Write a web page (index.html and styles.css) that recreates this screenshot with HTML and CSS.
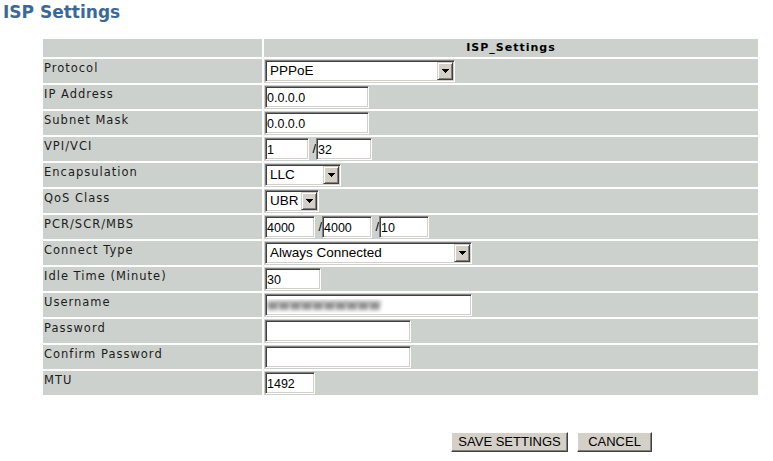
FILE: index.html
```html
<!DOCTYPE html>
<html>
<head>
<meta charset="utf-8">
<title>ISP Settings</title>
<link rel="stylesheet" href="styles.css">
</head>
<body>
<h1 class="title">ISP Settings</h1>
<table class="grid">
  <colgroup><col class="c1"><col class="c2"></colgroup>
  <tr class="head"><th></th><th>ISP_Settings</th></tr>
  <tr><td class="lbl">Protocol</td><td class="fld">
    <div class="sel w190"><span class="sel-val">PPPoE</span><span class="sel-btn"><svg width="7" height="4" viewBox="0 0 7 4"><rect x="0" y="0" width="7" height="1"/><rect x="1" y="1" width="5" height="1"/><rect x="2" y="2" width="3" height="1"/><rect x="3" y="3" width="1" height="1"/></svg></span></div>
  </td></tr>
  <tr><td class="lbl">IP Address</td><td class="fld"><input class="txt w104" value="0.0.0.0"></td></tr>
  <tr><td class="lbl">Subnet Mask</td><td class="fld"><input class="txt w104" value="0.0.0.0"></td></tr>
  <tr><td class="lbl">VPI/VCI</td><td class="fld"><div class="multi"><input class="txt w44" value="1"><span class="slash">/</span><input class="txt w56" value="32"></div></td></tr>
  <tr><td class="lbl">Encapsulation</td><td class="fld">
    <div class="sel w76"><span class="sel-val">LLC</span><span class="sel-btn"><svg width="7" height="4" viewBox="0 0 7 4"><rect x="0" y="0" width="7" height="1"/><rect x="1" y="1" width="5" height="1"/><rect x="2" y="2" width="3" height="1"/><rect x="3" y="3" width="1" height="1"/></svg></span></div>
  </td></tr>
  <tr><td class="lbl">QoS Class</td><td class="fld">
    <div class="sel w54"><span class="sel-val">UBR</span><span class="sel-btn"><svg width="7" height="4" viewBox="0 0 7 4"><rect x="0" y="0" width="7" height="1"/><rect x="1" y="1" width="5" height="1"/><rect x="2" y="2" width="3" height="1"/><rect x="3" y="3" width="1" height="1"/></svg></span></div>
  </td></tr>
  <tr><td class="lbl">PCR/SCR/MBS</td><td class="fld"><div class="multi"><input class="txt w50" value="4000"><span class="slash">/</span><input class="txt w50" value="4000"><span class="slash">/</span><input class="txt w50" value="10"></div></td></tr>
  <tr><td class="lbl">Connect Type</td><td class="fld">
    <div class="sel w207"><span class="sel-val">Always Connected</span><span class="sel-btn"><svg width="7" height="4" viewBox="0 0 7 4"><rect x="0" y="0" width="7" height="1"/><rect x="1" y="1" width="5" height="1"/><rect x="2" y="2" width="3" height="1"/><rect x="3" y="3" width="1" height="1"/></svg></span></div>
  </td></tr>
  <tr><td class="lbl">Idle Time (Minute)</td><td class="fld"><input class="txt w56" value="30"></td></tr>
  <tr><td class="lbl">Username</td><td class="fld"><input class="txt w207 blur" value="WWWWWWWWWW"></td></tr>
  <tr><td class="lbl">Password</td><td class="fld"><input class="txt w146" type="password" value=""></td></tr>
  <tr><td class="lbl">Confirm Password</td><td class="fld"><input class="txt w146" type="password" value=""></td></tr>
  <tr><td class="lbl">MTU</td><td class="fld"><input class="txt w50" value="1492"></td></tr>
</table>
<div class="actions">
  <button class="btn w117">SAVE SETTINGS</button>
  <button class="btn w75">CANCEL</button>
</div>
</body>
</html>
```
FILE: styles.css
```css
html, body {
  margin: 0;
  padding: 0;
  background: #ffffff;
}
body {
  font-family: "DejaVu Sans", Verdana, sans-serif;
  color: #000;
}
.title {
  margin: 2px 0 0 3px;
  font-family: "DejaVu Sans", Verdana, sans-serif;
  font-weight: bold;
  font-size: 17px;
  line-height: 20px;
  color: #3a6899;
}
.grid {
  margin: 15px 0 0 41px;
  border-collapse: separate;
  border-spacing: 2px;
  table-layout: fixed;
  width: 719px;
}
.c1 { width: 219px; }
.c2 { width: 494px; }
.grid th,
.grid td {
  background: #cdd1ce;
  padding: 0;
}
.head th {
  height: 18px;
  font-size: 11px;
  font-weight: bold;
  letter-spacing: 1px;
  line-height: 18px;
  text-align: center;
  vertical-align: middle;
}
.lbl {
  height: 21px;
  padding: 3px 0 0 1px !important;
  vertical-align: top;
  font-size: 11.5px;
  line-height: 13px;
  letter-spacing: 1px;
  white-space: nowrap;
  color: #1c1c1c;
}
.fld {
  height: 23px;
  padding: 1px 0 0 1px !important;
  vertical-align: top;
}
.multi {
  display: flex;
  align-items: flex-start;
}
.slash {
  width: 7px;
  text-align: right;
  font-family: "Liberation Sans", Arial, sans-serif;
  font-size: 13px;
  line-height: 22px;
}
.txt {
  box-sizing: border-box;
  display: block;
  height: 22px;
  margin: 0;
  padding: 1px 1px 0 1px;
  background: #fff;
  border-style: solid;
  border-width: 1px;
  border-color: #808080 #ffffff #ffffff #808080;
  box-shadow: inset 1px 1px #404040, inset -1px -1px #d4d0c8;
  font-family: "Liberation Sans", Arial, sans-serif;
  font-size: 12.5px;
  color: #000;
  outline: none;
}
.blur {
  color: transparent;
  text-shadow: 0 0 4px rgba(70, 70, 70, 1);
  font-size: 12px;
  font-weight: bold;
}
.sel {
  box-sizing: border-box;
  display: flex;
  align-items: center;
  height: 22px;
  padding: 1px;
  background: #fff;
  border-style: solid;
  border-width: 1px;
  border-color: #808080 #ffffff #ffffff #808080;
  box-shadow: inset 1px 1px #404040, inset -1px -1px #d4d0c8;
}
.sel-val {
  flex: 1;
  padding-left: 3px;
  font-family: "Liberation Sans", Arial, sans-serif;
  font-size: 13.5px;
  line-height: 18px;
  white-space: nowrap;
  overflow: hidden;
}
.sel-btn {
  box-sizing: border-box;
  width: 16px;
  height: 18px;
  display: flex;
  align-items: center;
  justify-content: center;
  background: #d4d0c8;
  border-style: solid;
  border-width: 1px;
  border-color: #d4d0c8 #404040 #404040 #d4d0c8;
  box-shadow: inset 1px 1px #ffffff, inset -1px -1px #808080;
}
.sel-btn svg { display: block; fill: #000; }
.w44 { width: 44px; }
.w50 { width: 50px; }
.w54 { width: 54px; }
.w56 { width: 56px; }
.w76 { width: 76px; }
.w104 { width: 104px; }
.w146 { width: 146px; }
.w190 { width: 190px; }
.w207 { width: 207px; }
.w117 { width: 117px; }
.w75 { width: 75px; }
.actions {
  display: flex;
  gap: 9px;
  margin: 35px 0 0 451px;
}
.btn {
  box-sizing: border-box;
  height: 20px;
  margin: 0;
  padding: 0;
  background: #d4d0c8;
  border-style: solid;
  border-width: 1px;
  border-color: #ffffff #404040 #404040 #ffffff;
  box-shadow: inset -1px -1px #808080, inset 1px 1px #d4d0c8;
  font-family: "Liberation Sans", Arial, sans-serif;
  font-size: 13px;
  color: #000;
  line-height: 18px;
}
```
